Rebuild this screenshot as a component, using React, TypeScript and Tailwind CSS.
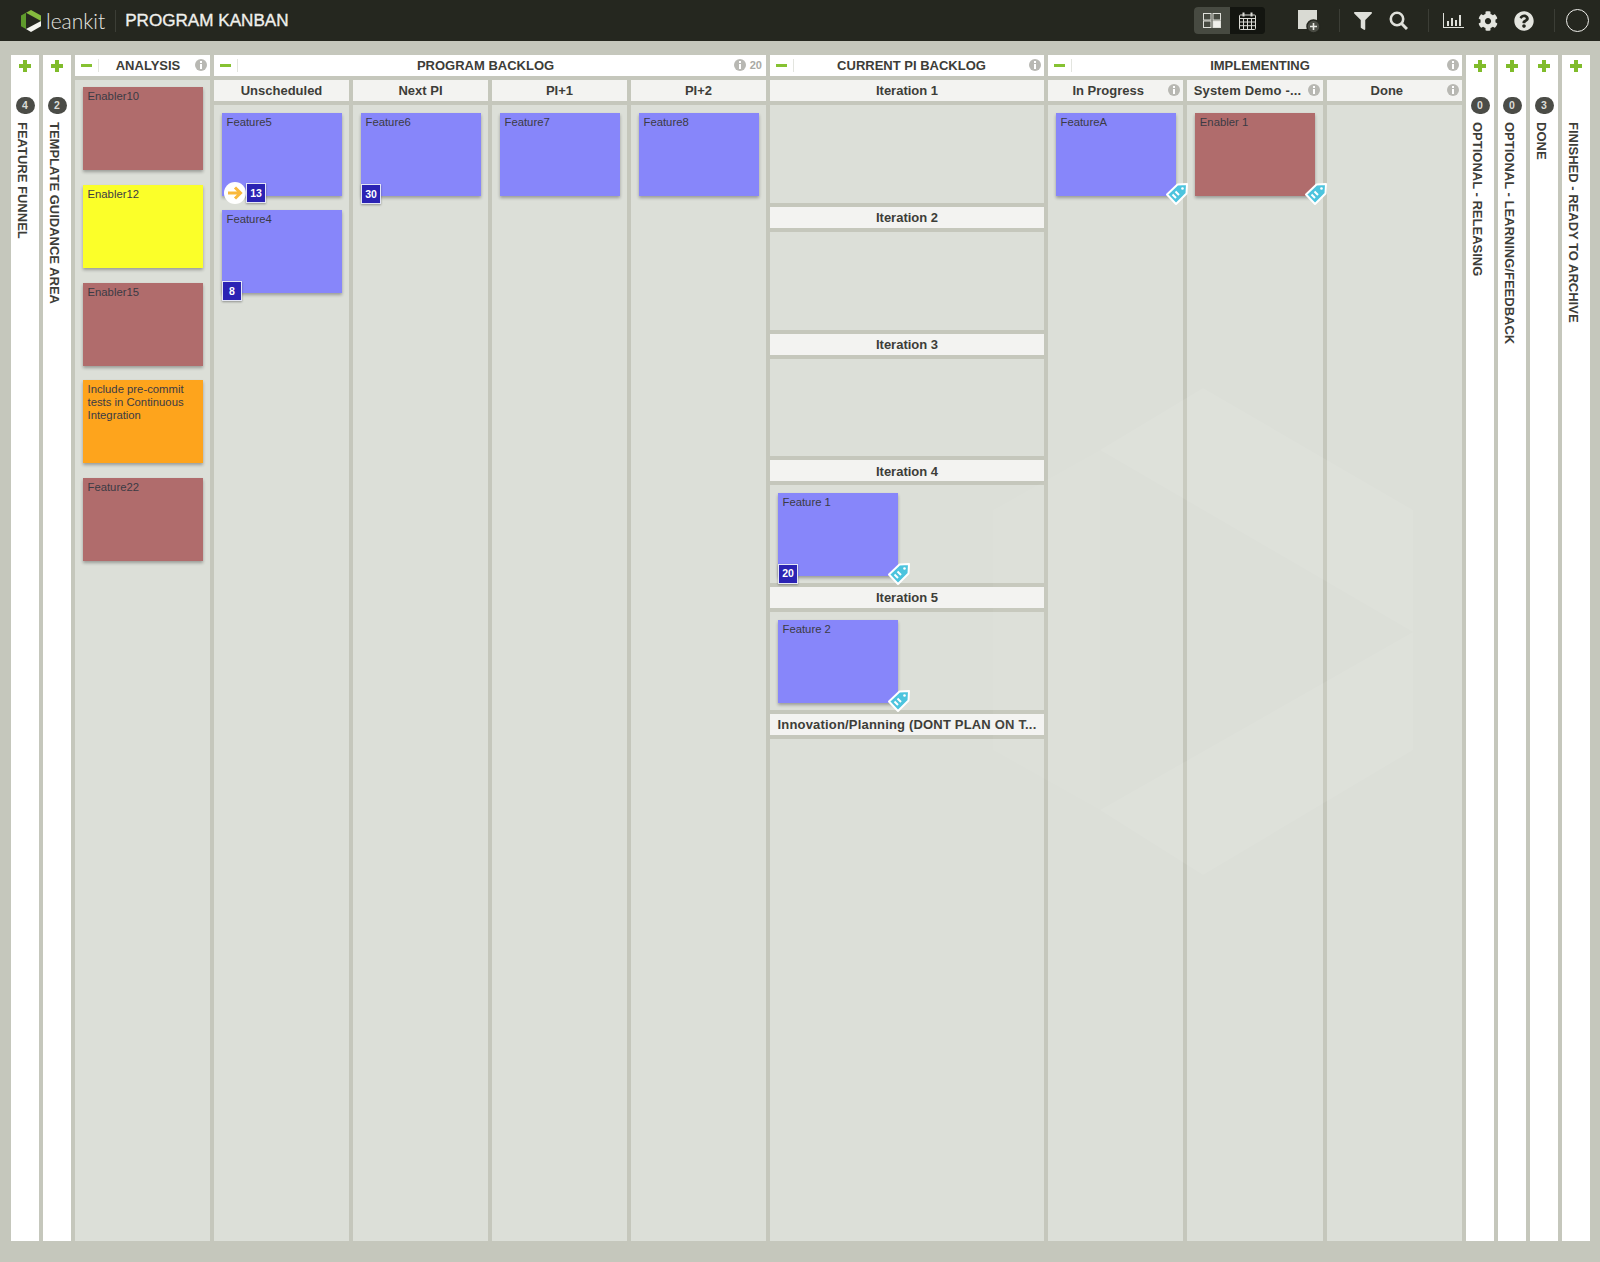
import React from "react";
import { FaCog, FaFilter, FaQuestionCircle } from "react-icons/fa";

type Badge = { size?: string; arrow?: boolean; tag?: boolean };
type CardT = Badge & { title: string; color: string };

const RED = "bg-[#b06c6c]";
const PURPLE = "bg-[#8786fa]";
const YELLOW = "bg-[#fbff29]";
const ORANGE = "bg-[#fea41c]";

function Plus() {
  return (
    <svg width="12" height="12" viewBox="0 0 12 12" className="shrink-0">
      <path d="M4 0h4v4h4v4H8v4H4V8H0V4h4z" fill="#80bc2b" />
    </svg>
  );
}

function Info() {
  return (
    <svg width="12" height="12" viewBox="0 0 12 12" className="shrink-0">
      <circle cx="6" cy="6" r="6" fill="#b8b8b3" />
      <rect x="5" y="2" width="2" height="2" fill="#fff" />
      <rect x="5" y="5" width="2" height="5" fill="#fff" />
    </svg>
  );
}

function Tag() {
  return (
    <svg width="24" height="24" viewBox="0 0 24 24" className="absolute -right-[13px] -bottom-[10px]">
      <path d="M22 2 L12.5 2.5 L2 12.5 L11 22 L21.5 11.5 Z" fill="#4cc4de" stroke="#fff" strokeWidth="2" strokeLinejoin="round" />
      <circle cx="17.5" cy="6.5" r="1.3" fill="#fff" />
      <path d="M7.5 12.5 L11 16 M10.5 9.5 L14 13" stroke="#fff" strokeWidth="2" />
    </svg>
  );
}

function Card({ title, color, size, arrow, tag }: CardT) {
  return (
    <div className={`relative h-[83px] w-[120px] shrink-0 px-[4.5px] pt-[3px] text-[11.3px] leading-[13px] text-[#3b3b44] shadow-[0_2px_3px_rgba(0,0,0,0.3)] ${color}`}>
      {title}
      {(size || arrow) && (
        <div className="absolute -bottom-[8px] left-0 flex items-center">
          {arrow && (
            <div className="ml-[2px] flex h-[22px] w-[22px] items-center justify-center rounded-full bg-white">
              <svg width="16" height="16" viewBox="0 0 16 16" fill="none">
                <path d="M1 8h12M8 2.5 13.5 8 8 13.5" stroke="#f9b93c" strokeWidth="3" />
              </svg>
            </div>
          )}
          {size && (
            <div className="flex h-[20px] w-[20px] items-center justify-center border border-[#e4e6f5] bg-[#2b23b4] text-[10.5px] font-bold text-white shadow-[0_1px_2px_rgba(0,0,0,0.35)]">
              {size}
            </div>
          )}
        </div>
      )}
      {tag && <Tag />}
    </div>
  );
}

function Collapsed({ title, count }: { title: string; count?: string }) {
  return (
    <div className="flex w-[28px] shrink-0 flex-col items-center bg-white pt-[5px]">
      <Plus />
      <div className="mt-[25px] h-[17px] w-[19px] shrink-0">
        {count && (
          <div className="flex h-[17px] w-[19px] items-center justify-center rounded-full bg-[#4b4c47] text-[10.5px] font-bold text-[#dcdcd8]">
            {count}
          </div>
        )}
      </div>
      <div className="mr-[5px] mt-[8px] whitespace-nowrap text-[13px] font-bold leading-[13px] text-[#3d3d38] [writing-mode:vertical-rl]">
        {title}
      </div>
    </div>
  );
}

function TopHeader({ title, reserve, extra }: { title: string; reserve: string; extra?: string }) {
  return (
    <div className="relative flex h-[21px] shrink-0 items-center bg-white text-[13px] font-bold text-[#3d3d38]">
      <div className="flex h-[13px] w-[24px] shrink-0 items-center justify-start border-r border-[#e3e5df] pl-[6px]">
        <div className="h-[3px] w-[11px] bg-[#86c232]" />
      </div>
      <div className={`flex-1 whitespace-nowrap text-center ${reserve}`}>{title}</div>
      <div className="absolute right-[3px] top-[3.5px] flex items-center gap-[4px] text-[11px] leading-[12px] text-[#a9a9a4]">
        <Info />
        {extra && <span className="pr-[1px]">{extra}</span>}
      </div>
    </div>
  );
}

function SubHeader({ title, info, wide }: { title: string; info?: boolean; wide?: boolean }) {
  return (
    <div className={`relative flex h-[21px] shrink-0 items-center justify-center whitespace-nowrap bg-[#f3f3f1] pt-[1px] text-[13px] font-bold text-[#3d3d38] ${info ? "pr-[15px]" : ""} ${wide ? "tracking-[0.18px]" : ""}`}>
      {title}
      {info && (
        <div className="absolute right-[3px] top-[4px]">
          <Info />
        </div>
      )}
    </div>
  );
}

function Lane({ title, info, wide, cards }: { title: string; info?: boolean; wide?: boolean; cards: CardT[] }) {
  return (
    <div className="flex min-w-0 flex-col gap-[4px]">
      <SubHeader title={title} info={info} wide={wide} />
      <div className="flex flex-1 flex-col gap-[14px] bg-[#dcdfd8] p-[8px]">
        {cards.map((c) => (
          <Card key={c.title} {...c} />
        ))}
      </div>
    </div>
  );
}

function Iteration({ title, card, last, wide }: { title: string; card?: CardT; last?: boolean; wide?: boolean }) {
  return (
    <>
      <SubHeader title={title} wide={wide} />
      <div className={`bg-[#dcdfd8] px-[8px] pt-[7.5px] ${last ? "flex-1" : "h-[97.8px] shrink-0"}`}>
        {card && <Card {...card} />}
      </div>
    </>
  );
}

function TopBar() {
  return (
    <header className="flex h-[41px] shrink-0 items-center bg-[#25271f] text-white">
      <svg width="20" height="22" viewBox="0 0 20 22" className="ml-[21px] shrink-0">
        <path d="M0 5.5 5 2.8V19L0 16.3z" fill="#5f9a2c" />
        <path d="M5 2.8 10 0l10 5.5V11z" fill="#86bc3e" />
        <path d="M5 19 20 11v5.3L10 22z" fill="#f4f4ef" />
      </svg>
      <span className="ml-[5px] font-['Lato',sans-serif] text-[21px] font-light leading-none text-[#e6e6e1]">leankit</span>
      <div className="ml-[10px] h-[22px] w-px bg-[#3c3e36]" />
      <h1 className="ml-[9px] whitespace-nowrap text-[17.1px] font-normal text-[#f0f0ec] [-webkit-text-stroke:0.35px_#f0f0ec]">PROGRAM KANBAN</h1>

      <div className="ml-auto flex h-[27px] w-[71px] shrink-0 overflow-hidden rounded-[4px] bg-[#1b1d16]">
        <div className="flex w-[36px] items-center justify-center bg-[#474a41]">
          <svg width="18" height="15" viewBox="0 0 18 15" fill="none" stroke="#dfe0da">
            <rect x="0.5" y="0.5" width="7.5" height="6.5" />
            <rect x="10" y="0.5" width="7.5" height="6.5" />
            <rect x="0.5" y="8" width="7.5" height="6.5" />
            <rect x="10" y="8" width="7.5" height="6.5" fill="#f0f0ec" />
          </svg>
        </div>
        <div className="flex flex-1 items-center justify-center bg-[#131510]">
          <svg width="17" height="18" viewBox="0 0 17 18" fill="none" stroke="#dcdcd6">
            <rect x="0.5" y="3" width="16" height="14.5" rx="1" />
            <path d="M0.5 6.5h16M0.5 10h16M0.5 13.7h16M4.5 6.5v11M8.5 6.5v11M12.5 6.5v11" />
            <path d="M4.5 0.5v4M12.5 0.5v4" strokeWidth="2" />
          </svg>
        </div>
      </div>

      <div className="relative ml-[33px] h-[21px] w-[22px] shrink-0">
        <div className="h-[19px] w-[19px] bg-[#d9dad3]" />
        <svg width="15" height="15" viewBox="0 0 15 15" className="absolute bottom-[-3px] right-[-1px]">
          <circle cx="7.5" cy="7.5" r="6.5" fill="#4a4c44" stroke="#25271f" strokeWidth="1.5" />
          <path d="M7.5 4v7M4 7.5h7" stroke="#e8e8e2" strokeWidth="1.6" />
        </svg>
      </div>

      <div className="ml-[19px] h-[23px] w-px bg-[#3c3e36]" />
      <FaFilter className="ml-[14px] shrink-0 text-[18px] text-[#dfe0da]" />
      <svg width="19" height="19" viewBox="0 0 19 19" fill="none" className="ml-[17px] shrink-0" stroke="#dfe0da">
        <circle cx="8" cy="8" r="6.2" strokeWidth="2.6" />
        <path d="M12.5 12.5 18 18" strokeWidth="3" />
      </svg>
      <div className="ml-[20px] h-[23px] w-px bg-[#3c3e36]" />
      <svg width="21" height="15" viewBox="0 0 21 15" className="ml-[14px] shrink-0" fill="#dfe0da">
        <rect x="0" y="0" width="1" height="14" />
        <rect x="0" y="14" width="21" height="1" />
        <rect x="4" y="8" width="2" height="5" />
        <rect x="8" y="5" width="2" height="8" />
        <rect x="12" y="7" width="2" height="6" />
        <rect x="16" y="2" width="2" height="11" />
      </svg>
      <FaCog className="ml-[14px] shrink-0 text-[20px] text-[#e4e5df]" />
      <FaQuestionCircle className="ml-[16px] shrink-0 text-[20px] text-[#e4e5df]" />
      <div className="ml-[20px] h-[23px] w-px bg-[#3c3e36]" />
      <div className="ml-[11px] mr-[11px] h-[23px] w-[23px] shrink-0 rounded-full border-[1.5px] border-[#f0f0ec]" />
    </header>
  );
}

export default function App() {
  return (
    <div className="relative flex h-[1262px] w-[1600px] flex-col overflow-hidden bg-[#c5c7bc] font-['Liberation_Sans',Arial,sans-serif]">
      <TopBar />
      <main className="flex min-h-0 flex-1 gap-[4px] pb-[21px] pl-[11px] pt-[14px]">
        <Collapsed title="FEATURE FUNNEL" count="4" />
        <Collapsed title="TEMPLATE GUIDANCE AREA" count="2" />

        <section className="flex w-[135px] shrink-0 flex-col gap-[4px]">
          <TopHeader title="ANALYSIS" reserve="pr-[13px]" />
          <div className="flex flex-1 flex-col gap-[14.7px] bg-[#dcdfd8] px-[8px] pt-[7.3px]">
            <Card title="Enabler10" color={RED} />
            <Card title="Enabler12" color={YELLOW} />
            <Card title="Enabler15" color={RED} />
            <Card title="Include pre-commit tests in Continuous Integration" color={ORANGE} />
            <Card title="Feature22" color={RED} />
          </div>
        </section>

        <section className="flex w-[552px] shrink-0 flex-col gap-[4px]">
          <TopHeader title="PROGRAM BACKLOG" reserve="pr-[33px]" extra="20" />
          <div className="grid flex-1 grid-cols-4 gap-[4px]">
            <Lane
              title="Unscheduled"
              cards={[
                { title: "Feature5", color: PURPLE, size: "13", arrow: true },
                { title: "Feature4", color: PURPLE, size: "8" },
              ]}
            />
            <Lane title="Next PI" cards={[{ title: "Feature6", color: PURPLE, size: "30" }]} />
            <Lane title="PI+1" cards={[{ title: "Feature7", color: PURPLE }]} />
            <Lane title="PI+2" cards={[{ title: "Feature8", color: PURPLE }]} />
          </div>
        </section>

        <section className="flex w-[274px] shrink-0 flex-col gap-[4px]">
          <TopHeader title="CURRENT PI BACKLOG" reserve="pr-[15px]" />
          <div className="flex flex-1 flex-col gap-[4px]">
            <Iteration title="Iteration 1" />
            <Iteration title="Iteration 2" />
            <Iteration title="Iteration 3" />
            <Iteration title="Iteration 4" card={{ title: "Feature 1", color: PURPLE, size: "20", tag: true }} />
            <Iteration title="Iteration 5" card={{ title: "Feature 2", color: PURPLE, tag: true }} />
            <Iteration title="Innovation/Planning (DONT PLAN ON T..." last wide />
          </div>
        </section>

        <section className="flex w-[414px] shrink-0 flex-col gap-[4px]">
          <TopHeader title="IMPLEMENTING" reserve="pr-[14px]" />
          <div className="grid flex-1 grid-cols-3 gap-[4px]">
            <Lane title="In Progress" info cards={[{ title: "FeatureA", color: PURPLE, tag: true }]} />
            <Lane title="System Demo -..." info wide cards={[{ title: "Enabler 1", color: RED, tag: true }]} />
            <Lane title="Done" info cards={[]} />
          </div>
        </section>

        <Collapsed title="OPTIONAL - RELEASING" count="0" />
        <Collapsed title="OPTIONAL - LEARNING/FEEDBACK" count="0" />
        <Collapsed title="DONE" count="3" />
        <Collapsed title="FINISHED - READY TO ARCHIVE" />
      </main>

      {/* faint brand watermark lying over the board */}
      <svg width="1600" height="1262" viewBox="0 0 1600 1262" className="pointer-events-none absolute left-0 top-0">
        <path d="M1100 450 1203 388 1413 510V632z" fill="#fff" fillOpacity="0.07" />
        <path d="M1100 810 1413 632V750L1203 875z" fill="#fff" fillOpacity="0.07" />
        <path d="M993 510 1100 450V810L993 750z" fill="#fff" fillOpacity="0.04" />
      </svg>
    </div>
  );
}
